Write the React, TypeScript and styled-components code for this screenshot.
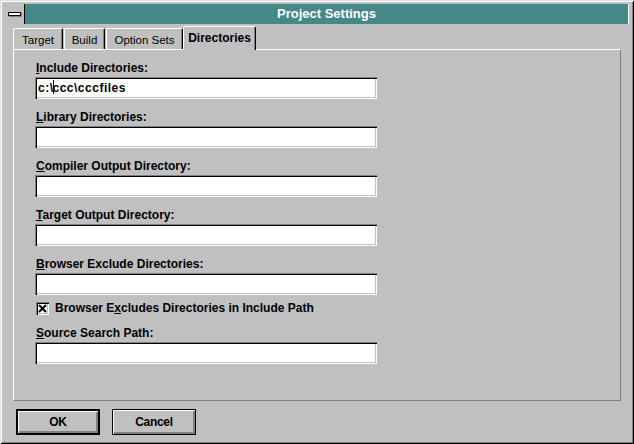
import React from 'react';
import styled, { createGlobalStyle } from 'styled-components';

const GlobalStyle = createGlobalStyle`
  html, body {
    margin: 0;
    padding: 0;
    background: #c0c0c0;
  }
  body {
    font-family: "Liberation Sans", Arial, sans-serif;
  }
  * {
    box-sizing: border-box;
  }
`;

const Window = styled.div`
  width: 634px;
  height: 444px;
  background: #c0c0c0;
  padding: 4px 5px;
  display: flex;
  flex-direction: column;
  box-shadow: inset 1px 1px 0 #dfdfdf, inset -1px -1px 0 #000,
    inset 2px 2px 0 #fff, inset -2px -2px 0 #808080;
`;

const TitleBar = styled.div`
  display: flex;
  height: 20px;
`;

const SysMenu = styled.div`
  width: 20px;
  background: #c0c0c0;
  border-right: 1px solid #000;
  display: flex;
  align-items: center;
  justify-content: center;
`;

const SysBar = styled.span`
  width: 13px;
  height: 4px;
  background: #fff;
  border: 1px solid #000;
  box-shadow: 1px 1px 0 #808080;
`;

const Title = styled.div`
  flex: 1;
  background: #448888;
  border-right: 1px solid #fff;
  color: #fff;
  font-size: 13px;
  font-weight: bold;
  line-height: 20px;
  text-align: center;
`;

const Body = styled.div`
  display: flex;
  flex-direction: column;
  padding: 0 8px;
`;

const TabRow = styled.div`
  display: flex;
  align-items: flex-end;
  height: 23px;
  margin-top: 2px;
  gap: 1px;
`;

const Tab = styled.div<{ $active?: boolean; $w: number }>`
  position: relative;
  z-index: ${p => (p.$active ? 1 : 0)};
  width: ${p => p.$w}px;
  height: ${p => (p.$active ? 24 : 21)}px;
  margin-bottom: ${p => (p.$active ? -1 : 0)}px;
  margin-left: ${p => (p.$active ? -1 : 0)}px;
  background: #c0c0c0;
  border-top: 1px solid #fff;
  border-left: 1px solid #fff;
  border-right: 1px solid #000;
  border-top-left-radius: 2px;
  border-top-right-radius: 2px;
  box-shadow: inset -1px 0 0 #808080;
  padding-top: ${p => (p.$active ? 4 : 5)}px;
  font-size: ${p => (p.$active ? 12 : 11.5)}px;
  font-weight: ${p => (p.$active ? 'bold' : 'normal')};
  line-height: ${p => (p.$active ? 14 : 13)}px;
  text-align: center;
  color: #000;
`;

const Panel = styled.div`
  height: 352px;
  border-top: 1px solid #fff;
  border-left: 1px solid #fff;
  border-right: 1px solid #808080;
  border-bottom: 1px solid #808080;
  padding: 11px 0 0 21px;
  display: flex;
  flex-direction: column;
  gap: 11px;
`;

const Field = styled.div`
  display: flex;
  flex-direction: column;
  gap: 2px;
`;

const Label = styled.label`
  margin-left: 1px;
  font-size: 12px;
  font-weight: bold;
  line-height: 14px;
  color: #000;

  u {
    text-decoration: underline;
  }
`;

const TextBox = styled.div`
  width: 342px;
  height: 22px;
  background: #fff;
  padding: 1px 0 0 3px;
  box-shadow: inset 1px 1px 0 #808080, inset 2px 2px 0 #000,
    inset -1px -1px 0 #fff, inset -2px -2px 0 #c0c0c0;
  font-size: 12px;
  font-weight: bold;
  letter-spacing: 0.5px;
  line-height: 20px;
  color: #000;
  white-space: pre;
`;

const Caret = styled.span`
  display: inline-block;
  width: 1px;
  height: 14px;
  margin: 0 -1px 0 -1px;
  background: #000;
  vertical-align: -2px;
`;

const CheckRow = styled.div`
  display: flex;
  align-items: center;
  gap: 6px;
  height: 14px;
  margin-top: -5px;
  margin-left: 1px;
  font-size: 12px;
  font-weight: bold;
  line-height: 14px;
  color: #000;
`;

const CheckBox = styled.span`
  width: 13px;
  height: 13px;
  background: #fff;
  box-shadow: inset 1px 1px 0 #808080, inset 2px 2px 0 #000,
    inset -1px -1px 0 #fff, inset -2px -2px 0 #c0c0c0;
  display: flex;
  align-items: center;
  justify-content: center;
`;

const ButtonRow = styled.div`
  display: flex;
  gap: 12px;
  margin-top: 8px;
  padding-left: 3px;
`;

const Button = styled.button<{ $default?: boolean }>`
  width: 84px;
  height: 26px;
  padding: 0;
  background: #c0c0c0;
  border: ${p => (p.$default ? 2 : 1)}px solid #000;
  box-shadow: inset 1px 1px 0 #fff, inset -1px -1px 0 #808080,
    inset -2px -2px 0 #808080;
  font-family: "Liberation Sans", Arial, sans-serif;
  font-size: 12px;
  font-weight: bold;
  letter-spacing: -0.3px;
  color: #000;
`;

const fields = [
  { key: 'I', rest: 'nclude Directories:', value: 'include' },
  { key: 'L', rest: 'ibrary Directories:' },
  { key: 'C', rest: 'ompiler Output Directory:' },
  { key: 'T', rest: 'arget Output Directory:' },
  { key: 'B', rest: 'rowser Exclude Directories:' },
];

export default function App() {
  return (
    <>
      <GlobalStyle />
      <Window>
        <TitleBar>
          <SysMenu>
            <SysBar />
          </SysMenu>
          <Title>Project Settings</Title>
        </TitleBar>
        <Body>
          <TabRow>
            <Tab $w={50}>Target</Tab>
            <Tab $w={41}>Build</Tab>
            <Tab $w={77}>Option Sets</Tab>
            <Tab $w={73} $active>Directories</Tab>
          </TabRow>
          <Panel>
            {fields.map(f => (
              <Field key={f.key}>
                <Label>
                  <u>{f.key}</u>
                  {f.rest}
                </Label>
                <TextBox>
                  {f.value ? (
                    <>
                      {'c:\\'}
                      <Caret />
                      {'ccc\\cccfiles'}
                    </>
                  ) : null}
                </TextBox>
              </Field>
            ))}
            <CheckRow>
              <CheckBox>
                <svg width="9" height="9" viewBox="0 0 9 9">
                  <path d="M1 1 L8 8 M8 1 L1 8" stroke="#000" strokeWidth="2" />
                </svg>
              </CheckBox>
              <span>
                Browser E<u>x</u>cludes Directories in Include Path
              </span>
            </CheckRow>
            <Field>
              <Label>
                <u>S</u>ource Search Path:
              </Label>
              <TextBox />
            </Field>
          </Panel>
          <ButtonRow>
            <Button $default>OK</Button>
            <Button>Cancel</Button>
          </ButtonRow>
        </Body>
      </Window>
    </>
  );
}
